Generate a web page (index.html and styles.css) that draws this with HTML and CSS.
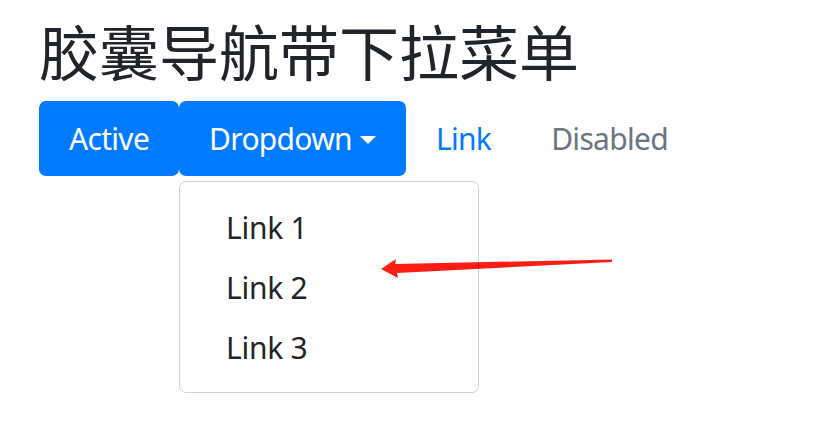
FILE: index.html
```html
<!DOCTYPE html>
<html lang="zh-CN">
<head>
    <meta charset="UTF-8">
    <meta name="viewport" content="width=device-width, initial-scale=1.0">
    <title>胶囊导航带下拉菜单</title>
    <link rel="stylesheet" href="styles.css">
</head>
<body>
    <div class="container">
        <h2 class="page-title">胶囊导航带下拉菜单</h2>

        <!-- 胶囊导航 -->
        <ul class="nav-pills">
            <li class="nav-item">
                <a class="nav-link active" href="#">Active</a>
            </li>
            <li class="nav-item dropdown show">
                <a class="nav-link dropdown-toggle" href="#">Dropdown</a>
                <div class="dropdown-menu">
                    <a class="dropdown-item" href="#">Link 1</a>
                    <a class="dropdown-item" href="#">Link 2</a>
                    <a class="dropdown-item" href="#">Link 3</a>
                </div>
            </li>
            <li class="nav-item">
                <a class="nav-link" href="#">Link</a>
            </li>
            <li class="nav-item">
                <a class="nav-link disabled" href="#">Disabled</a>
            </li>
        </ul>
    </div>

    <!-- 标注箭头 -->
    <svg class="note-arrow" width="840" height="437" viewBox="0 0 840 437">
        <polygon points="381,269 396,259 395,264 612,259.5 612,262 397,273 398,278" fill="#fb1d14"/>
    </svg>
</body>
</html>
```

FILE: styles.css
```css
/* 基本 */
html,
body {
    min-height: 437px;
}

body {
    position: relative;
    margin: 0;
    font-family: "Noto Sans", "Noto Sans CJK SC", sans-serif;
    color: #212529;
    background-color: #fff;
}

.container {
    padding: 14px 39px;
}

.page-title {
    margin: 0 0 15px;
    font-family: "Noto Sans CJK SC", sans-serif;
    font-size: 60px;
    font-weight: 400;
    line-height: 72px;
}

/* --- 胶囊导航 --- */
.nav-pills {
    display: flex;
    margin: 0;
    padding: 0;
    list-style: none;
}

.nav-item {
    position: relative;
}

.nav-link {
    display: block;
    padding: 15px 30px;
    font-size: 30px;
    line-height: 45px;
    letter-spacing: -0.7px;
    color: #007bff;
    text-decoration: none;
    border-radius: 7px;
}

.nav-link.active,
.show > .nav-link {
    color: #fff;
    background-color: #007bff;
}

.nav-link.disabled {
    color: #6c757d;
}

.dropdown-toggle::after {
    content: "";
    display: inline-block;
    margin-left: 8px;
    vertical-align: 6px;
    border-top: 8px solid;
    border-right: 8px solid transparent;
    border-left: 8px solid transparent;
}

/* ドロップダウン */
.dropdown-menu {
    position: absolute;
    top: 100%;
    left: 0;
    z-index: 2;
    width: 300px;
    box-sizing: border-box;
    margin-top: 5px;
    padding: 15px 0;
    border: 1px solid rgba(0, 0, 0, 0.18);
    border-radius: 7px;
    background-color: transparent; /* 箭头在边框下面 */
}

.dropdown-item {
    display: block;
    padding: 7.5px 46px;
    font-size: 30px;
    line-height: 45px;
    letter-spacing: -0.3px;
    color: #212529;
    text-decoration: none;
}

/* 标注 */
.note-arrow {
    position: absolute;
    top: 0;
    left: 0;
    z-index: 1;
    pointer-events: none;
}
```
